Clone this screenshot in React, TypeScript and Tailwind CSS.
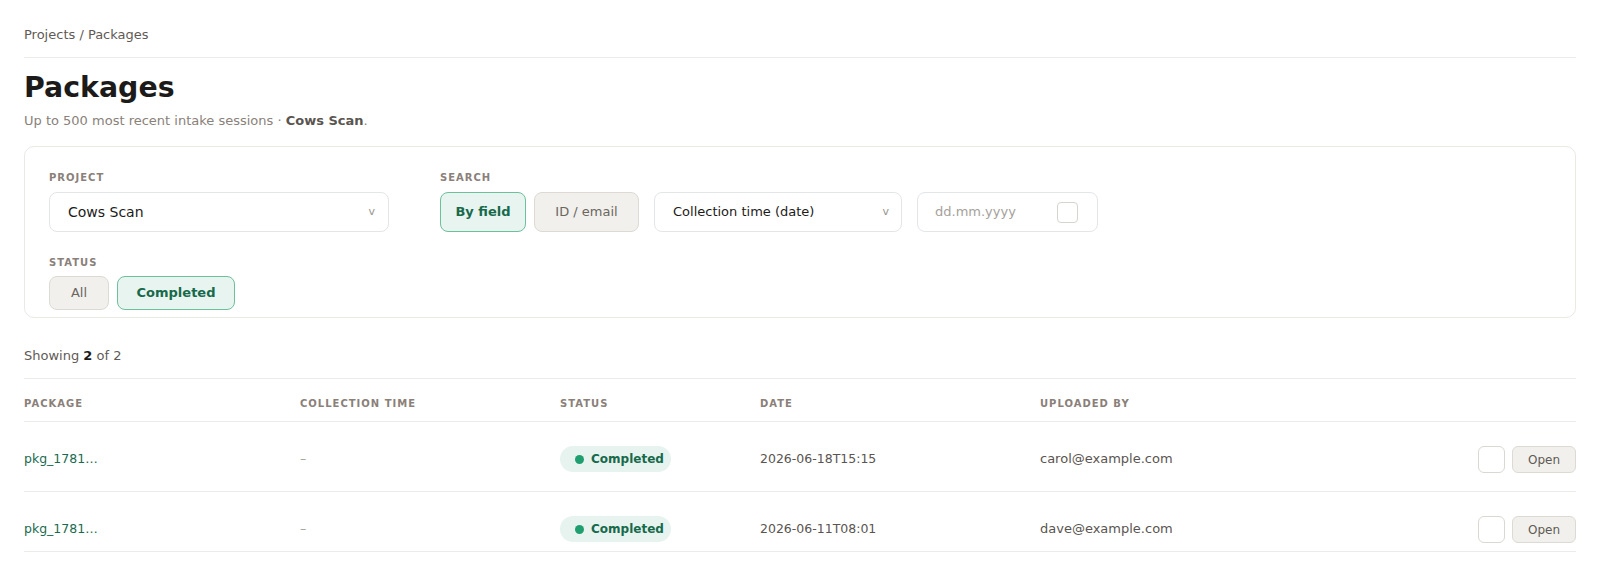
import React from "react";

const rows = [
  { id: "pkg_1781…", time: "–", date: "2026-06-18T15:15", by: "carol@example.com" },
  { id: "pkg_1781…", time: "–", date: "2026-06-11T08:01", by: "dave@example.com" },
];

function Label({ children }: { children: React.ReactNode }) {
  return (
    <div className="text-[10px] font-bold tracking-[0.1em] text-[#8a8079] leading-none">
      {children}
    </div>
  );
}

function App() {
  return (
    <div className="min-h-[572px] bg-white px-6 font-['DejaVu_Sans',sans-serif] text-[#1c1b19]">
      {/* breadcrumb */}
      <div className="flex h-[58px] items-center border-b border-[#ecebe7] pt-[12px] text-[13px] text-[#5f5a55]">
        Projects / Packages
      </div>

      <h1 className="mt-[13px] text-[28.4px] font-bold leading-[34px]">Packages</h1>
      <p className="mt-[8px] text-[13px] leading-[16px] text-[#8a817a]">
        Up to 500 most recent intake sessions · <b className="text-[#5a5550]">Cows Scan</b>.
      </p>

      {/* filters card */}
      <div className="mt-[17px] rounded-[10px] border border-[#ebe9e4] px-6 pt-[26px] pb-[7px]">
        <div className="flex">
          <div className="w-[391px]">
            <Label>PROJECT</Label>
            <div className="mt-[9px] flex h-[40px] w-[340px] items-center justify-between rounded-[8px] border border-[#e3e5e8] pl-[18px] pr-[13px]">
              <span className="text-[14px]">Cows Scan</span>
              <span className="text-[11px] text-[#9a958f]">v</span>
            </div>
          </div>
          <div>
            <Label>SEARCH</Label>
            <div className="mt-[9px] flex h-[40px] items-center">
              <button className="h-[40px] w-[86px] rounded-[8px] border border-[#6cc09c] bg-[#e8f4ef] text-[13px] font-bold text-[#17694b]">
                By field
              </button>
              <button className="ml-[8px] h-[40px] w-[105px] rounded-[8px] border border-[#dcdad3] bg-[#f1f0ec] text-[13px] text-[#6b665f]">
                ID / email
              </button>
              <div className="ml-[15px] flex h-[40px] w-[248px] items-center justify-between rounded-[8px] border border-[#e3e5e8] pl-[18px] pr-[12px]">
                <span className="text-[13px]">Collection time (date)</span>
                <span className="text-[11px] text-[#9a958f]">v</span>
              </div>
              <div className="ml-[15px] flex h-[40px] w-[181px] items-center justify-between rounded-[8px] border border-[#e3e5e8] pl-[17px] pr-[19px]">
                <span className="text-[13px] text-[#a5a19b]">dd.mm.yyyy</span>
                <span className="h-[21px] w-[21px] rounded-[4px] border border-[#d6d4ce]" />
              </div>
            </div>
          </div>
        </div>

        <div className="mt-[26px]">
          <Label>STATUS</Label>
          <div className="mt-[8px] flex gap-[8px]">
            <button className="h-[34px] w-[60px] rounded-[8px] border border-[#dcdad3] bg-[#f1f0ec] text-[13px] text-[#6b665f]">
              All
            </button>
            <button className="h-[34px] w-[118px] rounded-[8px] border border-[#6cc09c] bg-[#e8f4ef] text-[13px] font-bold text-[#17694b]">
              Completed
            </button>
          </div>
        </div>
      </div>

      {/* results */}
      <div className="mt-[29px] text-[13px] leading-[18px] text-[#5f5a55]">
        Showing <b className="text-[#1c1b19]">2</b> of 2
      </div>

      <div className="mt-[13px] border-t border-[#ecebe7]">
        <div className="grid h-[43px] grid-cols-[276px_260px_200px_280px_1fr] items-center border-b border-[#ecebe7] pt-[6px] text-[10px] font-bold tracking-[0.1em] text-[#8a8079]">
          <div>PACKAGE</div>
          <div>COLLECTION TIME</div>
          <div>STATUS</div>
          <div>DATE</div>
          <div>UPLOADED BY</div>
        </div>
        {rows.map((r, i) => (
          <div
            key={i}
            className={
              "grid grid-cols-[276px_260px_200px_280px_1fr] items-start border-b border-[#ecebe7] " +
              (i === 0 ? "h-[70px]" : "h-[60px]")
            }
          >
            <div className="pt-[28px] text-[12.5px] leading-[18px] text-[#1a6b4f]">{r.id}</div>
            <div className="pt-[28px] text-[12.5px] leading-[18px] text-[#a5a19b]">{r.time}</div>
            <div className="pt-[24px]">
              <span className="inline-flex h-[26px] items-center gap-[7px] rounded-full bg-[#e6f3ee] pl-[15px] pr-[7px] text-[12px] font-bold text-[#17694b]">
                <span className="h-[9px] w-[9px] rounded-full bg-[#1f9e70]" />
                Completed
              </span>
            </div>
            <div className="pt-[28px] text-[12.5px] leading-[18px] text-[#5a5550]">{r.date}</div>
            <div className="flex items-start justify-between">
              <span className="pt-[28px] text-[13px] leading-[18px] text-[#5a5550]">{r.by}</span>
              <div className="flex gap-[7px] pt-[24px]">
                <span className="h-[27px] w-[27px] rounded-[6px] border border-[#d9d8d2] bg-white" />
                <button className="h-[27px] w-[64px] rounded-[6px] border border-[#dcdad3] bg-[#f1f0ec] text-[12px] text-[#5f5a55]">
                  Open
                </button>
              </div>
            </div>
          </div>
        ))}
      </div>
    </div>
  );
}

export default App;
